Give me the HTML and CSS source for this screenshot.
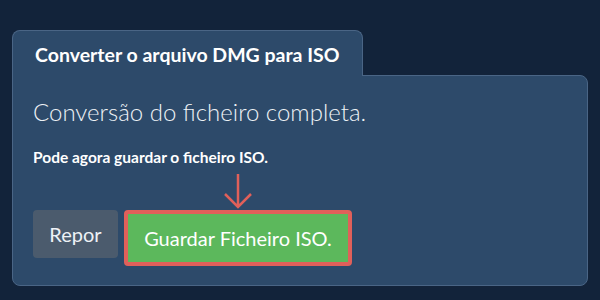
FILE: index.html
```html
<!DOCTYPE html>
<html lang="pt">
<head>
    <meta charset="UTF-8">
    <title>Converter DMG para ISO</title>
    <link rel="stylesheet" href="styles.css">
</head>
<body>
    <div class="wrapper">
        <div class="tab">Converter o arquivo DMG para ISO</div>
        <div class="panel">
            <h2 class="done-title">Conversão do ficheiro completa.</h2>
            <p class="done-text">Pode agora guardar o ficheiro ISO.</p>
            <div class="actions">
                <button class="button reset">Repor</button>
                <div class="save-wrap">
                    <svg class="arrow" width="30" height="36" viewBox="0 0 30 36">
                        <path d="M15 1 V34 M2 21 L15 34 L28 21" fill="none" stroke="#e0605a" stroke-width="2.5"/>
                    </svg>
                    <button class="button save">Guardar Ficheiro ISO.</button>
                </div>
            </div>
        </div>
    </div>
</body>
</html>
```

FILE: styles.css
```css
:root {
    --bg-color: #12233a;
    --panel-color: #2d4a6a;
    --border-color: #4a6585;
    --text-color: #ffffff;
    --green: #5cb85c;
    --red: #e0605a;
}

body {
    margin: 0;
    background-color: var(--bg-color);
    color: var(--text-color);
    font-family: 'Lato', sans-serif;
}

.wrapper {
    padding: 30px 12px 0 12px;
}

.tab {
    position: relative;
    z-index: 1;
    width: 351px;
    height: 46px;
    box-sizing: border-box;
    margin-bottom: -1px;
    padding: 11px 0 0 22px;
    background: var(--panel-color);
    border: 1px solid var(--border-color);
    border-bottom: none;
    border-radius: 8px 8px 0 0;
    font-size: 19.5px;
    font-weight: 700;
    line-height: 26px;
}

.panel {
    height: 211px;
    box-sizing: border-box;
    padding: 20px 20px 0 20px;
    background: var(--panel-color);
    border: 1px solid var(--border-color);
    border-radius: 0 8px 8px 8px;
}

.done-title {
    margin: 0;
    font-size: 24px;
    font-weight: 300;
    line-height: 32px;
    color: #eef2f6;
}

.done-text {
    margin: 19px 0 0 0;
    font-size: 15.5px;
    font-weight: 700;
    line-height: 20px;
}

.actions {
    display: flex;
    align-items: flex-start;
    gap: 6px;
    margin-top: 6px;
}

.button {
    font-family: 'Lato', sans-serif;
    font-size: 20px;
    color: #ffffff;
    border: none;
    cursor: pointer;
}

.reset {
    margin-top: 37px;
    width: 85px;
    height: 48px;
    background: #4b5b6d;
    border-radius: 4px;
    color: #eef2f6;
}

.save-wrap {
    display: flex;
    flex-direction: column;
    align-items: center;
}

.arrow {
    display: block;
    margin-bottom: 1px;
}

.save {
    width: 228px;
    height: 56px;
    background: var(--green);
    border: 4px solid var(--red);
    border-radius: 4px;
    padding: 0;
}
```
